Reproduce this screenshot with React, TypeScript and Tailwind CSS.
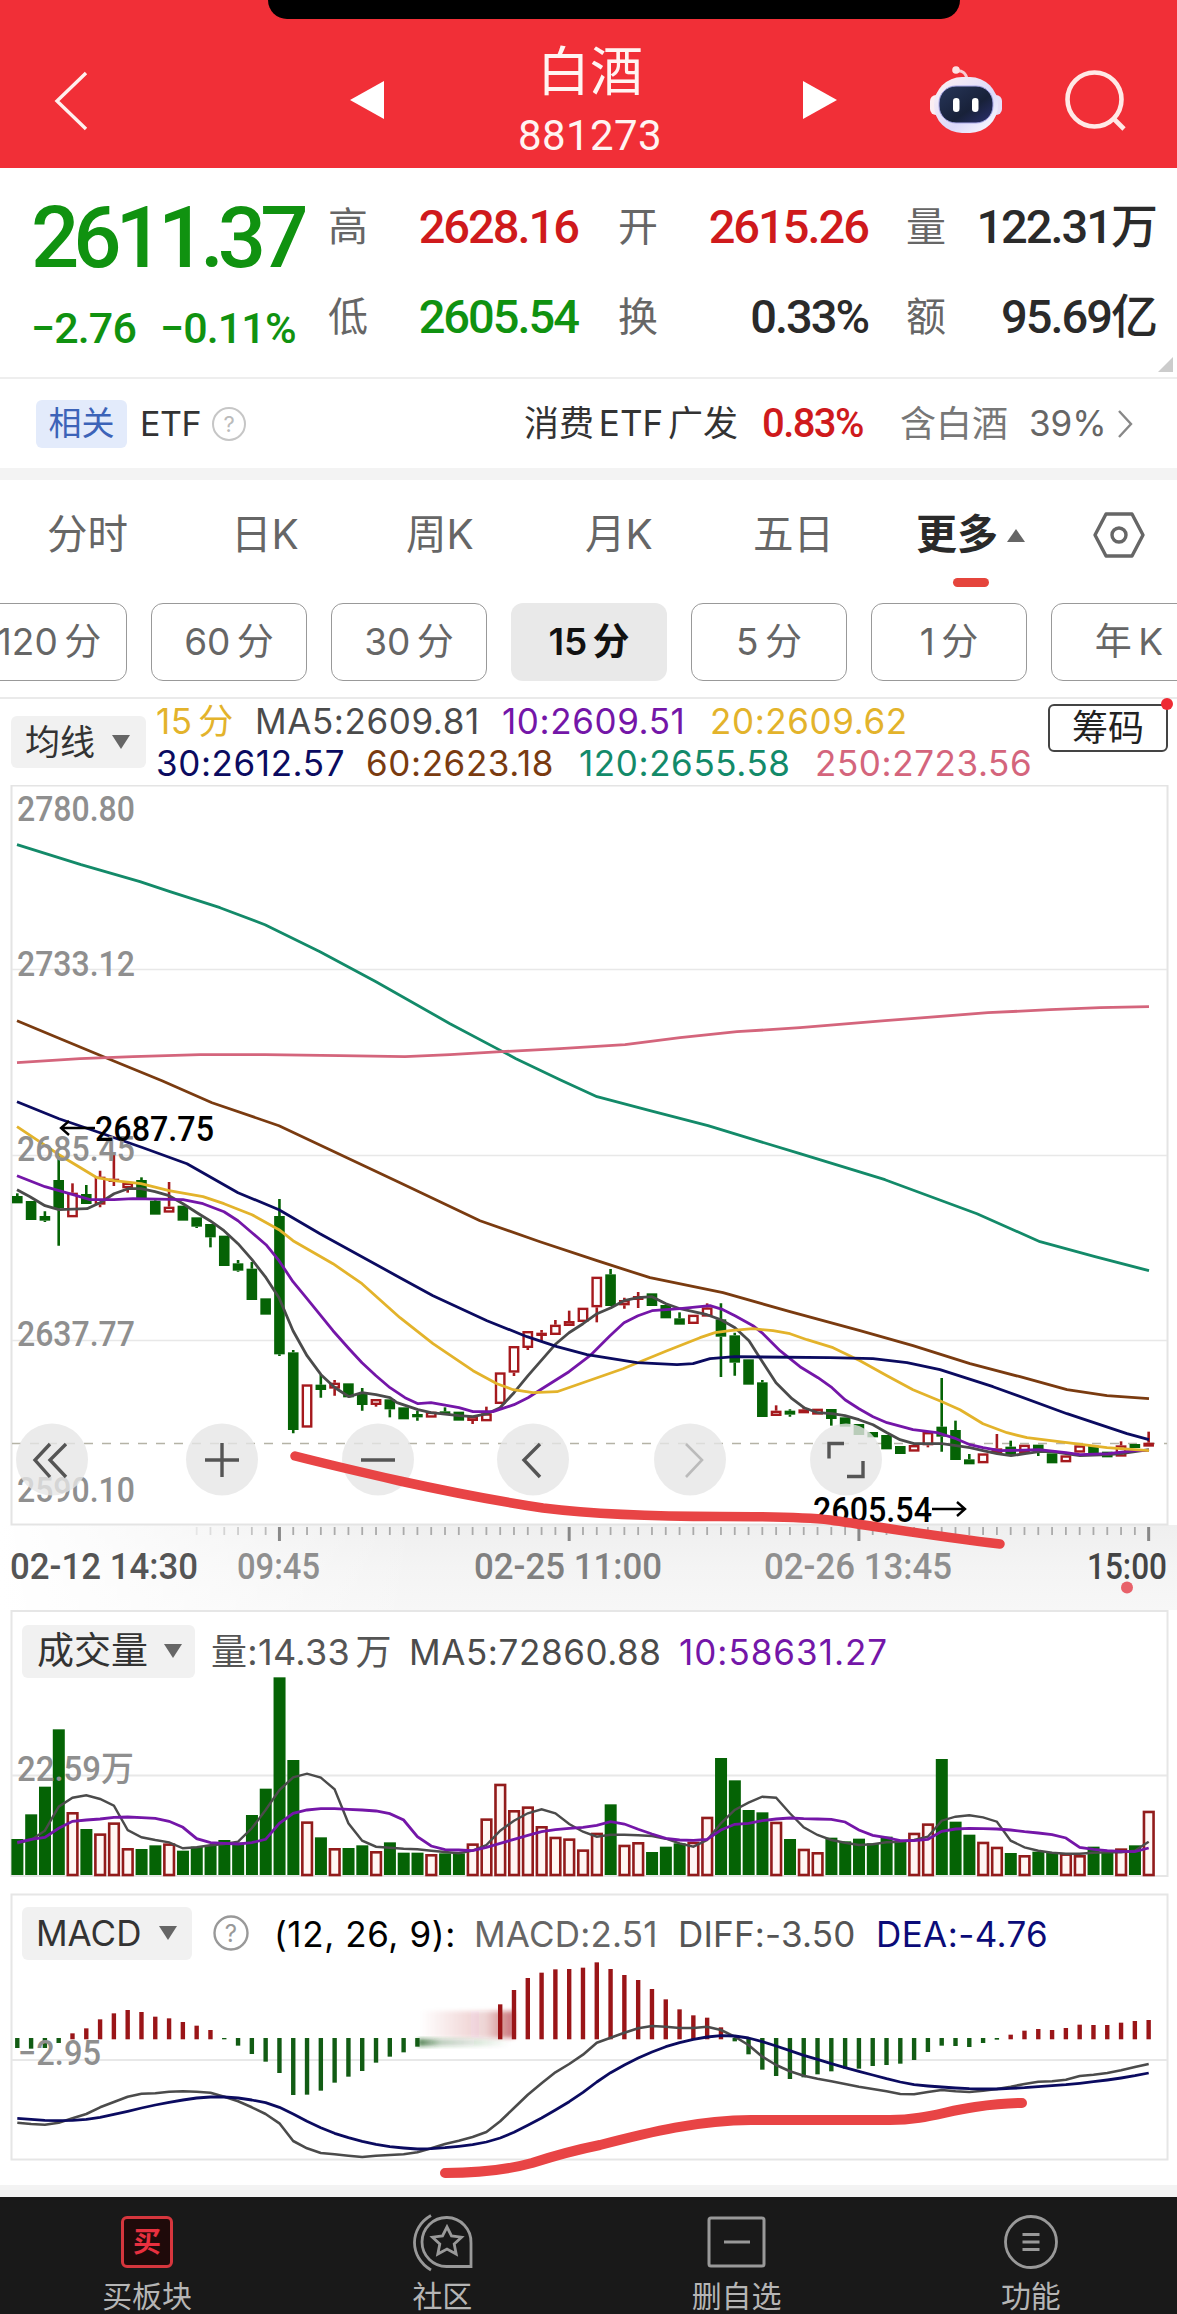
import React from 'react';

const GREEN = '#056305';
const RED = '#a5191d';
const STEP = 13.797;
const barX = (i: number) => 17.3 + i * STEP;

// [direction, body top, body bottom, high, low] in thirds of a pixel below y = 1080
type Candle = [string, number, number, number?, number?];

const candles: Candle[] = [
  ['g', 348, 370, 340], ['g', 363, 420], ['g', 408, 422, 394, 426], ['g', 300, 385, 225, 497],
  ['r', 338, 412, 310], ['g', 342, 372, 315], ['r', 290, 374, 272, 382], ['r', 296, 306, 225, 318],
  ['r', 308, 325, 308, 338], ['g', 300, 358, 292], ['g', 362, 404, 355], ['r', 380, 398, 306],
  ['g', 377, 422], ['g', 412, 440, 412, 444], ['g', 432, 472, 432, 502], ['g', 467, 558],
  ['g', 550, 572, 540, 575], ['g', 566, 660, 546], ['g', 655, 704], ['g', 408, 823, 357, 828],
  ['g', 817, 1050, 810, 1060], ['r', 913, 1043], ['g', 914, 930, 885, 953], ['r', 908, 926, 900, 947],
  ['g', 910, 952], ['g', 940, 975, 924, 992], ['r', 957, 975, 957, 980], ['g', 958, 988, 958, 1012],
  ['g', 982, 1018], ['g', 1002, 1012, 992, 1022], ['r', 995, 1013], ['g', 994, 1002, 982],
  ['g', 995, 1022], ['r', 1008, 1023, 1008, 1032], ['r', 1000, 1024, 980], ['r', 877, 972],
  ['r', 798, 878, 798, 888], ['r', 753, 804, 753, 810], ['r', 758, 768, 750, 784], ['r', 734, 765, 720],
  ['r', 723, 738, 692], ['r', 683, 726], ['r', 590, 682, 590, 727], ['g', 583, 678, 567],
  ['r', 660, 676, 653, 686], ['r', 648, 660, 636, 684], ['g', 640, 678], ['g', 675, 715],
  ['g', 715, 734, 697], ['r', 704, 732], ['r', 682, 710, 670], ['g', 718, 770, 670, 891],
  ['g', 766, 848, 758, 887], ['g', 838, 914], ['g', 907, 1011, 900], ['r', 992, 1008, 976],
  ['g', 992, 1004, 988, 1010], ['r', 988, 1000, 980], ['r', 986, 1004], ['g', 987, 1017, 987, 1037],
  ['g', 1012, 1040], ['g', 1032, 1065], ['g', 1056, 1072], ['g', 1065, 1108],
  ['g', 1098, 1122], ['r', 1095, 1115], ['r', 1056, 1096, 1056, 1102], ['g', 1040, 1070, 894, 1115],
  ['g', 1050, 1140, 1022], ['g', 1138, 1153, 1122], ['r', 1120, 1150], ['r', 1105, 1120, 1062],
  ['g', 1100, 1128, 1082], ['r', 1094, 1120], ['g', 1094, 1118, 1094, 1128], ['g', 1120, 1150],
  ['r', 1126, 1147], ['r', 1096, 1118], ['g', 1097, 1128], ['g', 1115, 1132],
  ['r', 1096, 1130, 1084], ['g', 1092, 1104], ['r', 1088, 1100, 1055],
];

const averages = [
  { color: '#4b4b4b', points: '17,1189 30,1196 45,1205 59,1209 87,1208 100,1202 114,1193 128,1188 141,1188 155,1191 169,1195 183,1203 197,1212 210,1220 224,1230 238,1243 252,1259 266,1277 279,1297 293,1330 307,1355 321,1374 335,1387 349,1396 362,1392 376,1394 390,1397 397,1402 418,1409 431,1412 459,1415 473,1416 487,1413 500,1407 514,1392 528,1375 542,1359 556,1343 569,1332 583,1323 597,1313 611,1307 624,1300 638,1297 652,1296 666,1303 680,1308 707,1314 721,1319 735,1327 749,1340 763,1362 776,1382 792,1398 804,1407 818,1412 832,1413 845,1415 859,1419 873,1424 887,1432 900,1439 914,1443 942,1443 956,1445 970,1447 983,1450 997,1453 1011,1455 1025,1453 1039,1451 1052,1451 1066,1453 1080,1455 1108,1454 1121,1453 1135,1451 1149,1449' },
  { color: '#7416a8', points: '17,1175 45,1186 73,1194 90,1199 114,1199 133,1198 183,1199 203,1203 224,1211 238,1220 252,1232 266,1244 279,1260 293,1281 307,1298 333,1330 349,1348 362,1362 376,1375 390,1387 405,1397 418,1403 431,1402 459,1407 473,1411 493,1411 514,1404 528,1397 542,1388 569,1371 590,1355 610,1335 624,1322 638,1315 652,1310 680,1308 710,1305 723,1309 735,1315 753,1325 763,1333 780,1350 800,1366 818,1377 832,1387 845,1399 859,1408 873,1416 887,1422 913,1429 937,1432 956,1438 970,1444 983,1447 1000,1450 1039,1449 1066,1452 1080,1454 1108,1453 1135,1450 1149,1450' },
  { color: '#e3b32b', points: '17,1126 59,1154 97,1177 114,1180 141,1183 169,1190 203,1196 224,1203 252,1214 279,1229 293,1240 333,1263 362,1283 400,1317 433,1343 473,1370 497,1383 513,1389 533,1392 557,1391 580,1383 623,1368 667,1350 700,1337 715,1332 730,1330 753,1328 773,1330 790,1333 807,1339 833,1347 860,1360 887,1375 913,1389 942,1401 960,1409 983,1423 1007,1432 1027,1437 1067,1442 1107,1447 1149,1450' },
  { color: '#0b0b60', points: '17,1101 59,1118 100,1132 143,1147 187,1163 238,1192 279,1209 320,1233 400,1277 433,1295 487,1320 527,1336 557,1346 587,1354 637,1362 677,1364 693,1363 710,1358 735,1356 830,1357 873,1358 907,1362 940,1369 993,1386 1067,1413 1127,1433 1149,1439' },
  { color: '#7a3b10', points: '17,1020 65,1040 118,1062 162,1080 212,1102 279,1125 400,1182 480,1220 540,1241 597,1260 650,1277 723,1292 790,1311 860,1330 913,1345 970,1363 1020,1376 1067,1389 1107,1395 1149,1398' },
  { color: '#138a69', points: '17,844 81,864 140,881 170,891 220,907 265,924 320,951 376,981 450,1023 516,1058 560,1079 597,1096 650,1110 708,1125 800,1153 885,1179 977,1213 1040,1241 1095,1256 1149,1270' },
  { color: '#d4657c', points: '17,1062 80,1058 133,1056 200,1054 265,1054 340,1055 405,1056 450,1054 501,1051 560,1048 625,1044 680,1037 737,1031 800,1027 885,1020 988,1012 1050,1009 1100,1007 1149,1006' },
];

// Bar tops in thirds of a pixel below y = 1610, the base line is at 795
const volumeTops = [
  687, 613, 530, 358, 606, 657, 670, 637, 714, 717, 706, 700, 722, 710, 705, 690, 698, 615, 536, 202, 450,
  634, 682, 714, 714, 706, 723, 697, 728, 728, 732, 730, 730, 700, 625, 521, 600, 589, 648, 680, 685, 718,
  668, 583, 704, 696, 726, 710, 700, 695, 620, 444, 511, 600, 607, 635, 687, 716, 726, 683, 694, 686, 700,
  680, 694, 668, 640, 447, 635, 674, 695, 710, 729, 735, 725, 728, 730, 735, 710, 725, 715, 706, 602,
];
const volumeRed = new Set([4, 6, 7, 8, 11, 21, 23, 26, 30, 33, 34, 35, 36, 37, 38, 39, 40, 41, 42, 44, 45, 49, 50, 55, 57, 58, 65, 66, 70, 71, 73, 76, 77, 80, 82]);
const volumeMa5 = [
  700, 690, 662, 590, 563, 556, 567, 587, 660, 682, 690, 697, 715, 712, 706, 702, 695, 655, 600, 540, 502,
  491, 503, 538, 640, 692, 710, 713, 716, 718, 722, 726, 730, 722, 705, 662, 632, 610, 598, 610, 642, 665,
  680, 674, 674, 676, 678, 686, 700, 710, 690, 640, 600, 578, 560, 563, 610, 652, 675, 690, 698, 705, 703,
  697, 695, 690, 680, 632, 620, 616, 622, 635, 692, 712, 722, 728, 731, 731, 728, 727, 727, 722, 695,
];
const volumeMa10 = [
  697, 688, 682, 655, 634, 630, 627, 622, 621, 623, 625, 634, 652, 686, 698, 700, 702, 698, 688, 640, 610,
  600, 596, 596, 598, 600, 603, 611, 630, 680, 708, 719, 720, 722, 712, 700, 688, 676, 665, 659, 655, 652,
  646, 635, 642, 658, 672, 685, 690, 691, 688, 660, 643, 640, 632, 627, 624, 626, 627, 628, 636, 660, 676,
  683, 692, 692, 688, 664, 657, 655, 656, 657, 660, 665, 669, 674, 684, 712, 718, 722, 724, 725, 714,
];

// MACD values in thirds of a pixel below y = 1890, zero line at 446; null bars are drawn as a fade
const macdBars: (number | null)[] = [
  474, 476, 474, 459, 430, 415, 388, 370, 360, 366, 380, 385, 396, 407, 420, 448, 467, 492, 515, 549, 615,
  614, 602, 578, 560, 543, 518, 500, 487, 470, null, null, null, null, null, 343, 300, 264, 248, 238, 237,
  233, 217, 237, 255, 270, 297, 328, 358, 376, 383, 412, 454, 493, 539, 558, 567, 562, 553, 544, 536, 536,
  528, 525, 521, 510, 486, 467, 468, 471, 459, 449, 434, 422, 417, 420, 414, 404, 405, 405, 398, 393, 390,
];
const diff = [
  698, 702, 704, 698, 685, 672, 652, 636, 620, 611, 610, 605, 604, 605, 608, 620, 634, 652, 672, 700, 753,
  775, 789, 793, 797, 801, 797, 795, 793, 787, 775, 762, 752, 741, 726, 694, 654, 614, 580, 547, 522, 494,
  458, 443, 428, 415, 408, 410, 414, 414, 410, 420, 440, 465, 500, 525, 544, 557, 566, 574, 582, 590, 597,
  604, 612, 613, 606, 600, 604, 606, 602, 597, 590, 582, 575, 574, 569, 558, 554, 549, 541, 531, 522,
];
const dea = [
  685, 688, 691, 692, 691, 688, 682, 673, 664, 654, 645, 637, 630, 624, 621, 621, 624, 630, 638, 652, 672,
  694, 713, 730, 743, 754, 763, 770, 774, 777, 776, 773, 769, 764, 756, 744, 727, 706, 684, 660, 635, 607,
  576, 548, 525, 504, 486, 470, 458, 448, 441, 437, 438, 444, 455, 468, 482, 496, 508, 521, 533, 544, 555,
  566, 576, 584, 588, 591, 594, 596, 597, 597, 595, 593, 590, 587, 584, 580, 575, 570, 564, 557, 549,
];

const toPoints = (values: number[], top: number) =>
  values.map((v, i) => `${barX(i).toFixed(1)},${(top + v / 3).toFixed(1)}`).join(' ');

const latin = "font-['Inter','Noto_Sans_CJK_SC',sans-serif]";
const din = "font-['Roboto','Noto_Sans_CJK_SC',sans-serif]";

const Header = () => (
  <header className="relative flex h-[168px] items-center bg-[#f12f37] text-[#fff4f2]">
    <div className="absolute left-[268px] top-0 h-[19px] w-[692px] rounded-b-[40px] bg-black" />
    <svg className="mt-[34px] ml-[52px] h-[64px] w-[38px]" viewBox="0 0 38 64" fill="none" stroke="#fff0ee" strokeWidth="3.4">
      <path d="M34 4 5 32l29 28" />
    </svg>
    <svg className="mt-[32px] ml-[260px] h-[38px] w-[34px]" viewBox="0 0 34 38" fill="#fff">
      <path d="M34 0v38L0 19z" />
    </svg>
    <div className="ml-[105px] w-[202px] pt-7 text-center">
      <h1 className="h-[74px] text-[53px] leading-[78px]">白酒</h1>
      <p className={`${din} h-[56px] text-[42px] leading-[58px] tracking-[0.4px]`}>881273</p>
    </div>
    <svg className="mt-[32px] ml-[112px] h-[38px] w-[34px]" viewBox="0 0 34 38" fill="#fff">
      <path d="M0 0v38l34-19z" />
    </svg>
    <svg className="mt-[30px] ml-[90px] h-[74px] w-[78px]" viewBox="927 61 78 74">
      <defs>
        <linearGradient id="head" x1="0" y1="0" x2="1" y2="1">
          <stop offset="0" stopColor="#fff3f3" />
          <stop offset=".6" stopColor="#dcd9fa" />
          <stop offset="1" stopColor="#fff" />
        </linearGradient>
        <linearGradient id="face" x1="0" y1="0" x2="1" y2="1">
          <stop offset="0" stopColor="#27365a" />
          <stop offset=".6" stopColor="#182139" />
          <stop offset="1" stopColor="#2b3070" />
        </linearGradient>
      </defs>
      <path d="M956 70c6-1 10 2 11 8" fill="none" stroke="#f8ccd3" strokeWidth="3" />
      <circle cx="956" cy="69" r="3.8" fill="#fde3e5" />
      <rect x="930" y="94" width="12" height="20" rx="6" fill="#fbeef2" />
      <rect x="990" y="94" width="12" height="20" rx="6" fill="#e6dff8" />
      <rect x="934" y="76" width="64" height="56" rx="28" fill="url(#head)" />
      <rect x="939" y="85" width="54" height="37" rx="17" fill="url(#face)" stroke="#a9a8e8" strokeWidth="1" />
      <rect x="953" y="97" width="6.5" height="14" rx="3.2" fill="#fff" />
      <rect x="972" y="97" width="6.5" height="14" rx="3.2" fill="#fff" />
    </svg>
    <svg className="mt-[34px] ml-[57px] h-[70px] w-[70px]" viewBox="1061 66 70 70" fill="none" stroke="#ffe9e6" strokeWidth="4.6">
      <circle cx="1093.5" cy="99.5" r="27" />
      <path d="m1112 118 11 11" />
    </svg>
  </header>
);

const Stat = ({ label, value, color }: { label: string; value: string; color: string }) => (
  <div className="flex h-[90px] w-[250px] items-center justify-between">
    <span className="text-[40px] text-[#666]">{label}</span>
    <span className={`${din} text-[47px] font-medium tracking-[-2px] ${color}`}>{value}</span>
  </div>
);

const Quote = () => (
  <section className="relative flex h-[211px] border-b-2 border-[#eee] bg-white text-[#2a2a2a]">
    <div className={`${din} w-[328px] pl-[31px] pt-[20px] text-[#109210]`}>
      <div className="h-[102px] text-[85px] leading-[100px] font-medium tracking-[-6px]">2611.37</div>
      <div className="flex h-[76px] items-center gap-[24px] text-[43px] leading-[76px] font-medium tracking-[-0.9px]">
        <span>−2.76</span>
        <span>−0.11%</span>
      </div>
    </div>
    <div className="grid flex-1 content-start grid-cols-[290px_288px_250px] pt-[14px]">
      <Stat label="高" value="2628.16" color="text-[#cf1a1c]" />
      <Stat label="开" value="2615.26" color="text-[#cf1a1c]" />
      <Stat label="量" value="122.31万" color="text-[#2a2a2a]" />
      <Stat label="低" value="2605.54" color="text-[#109210]" />
      <Stat label="换" value="0.33%" color="text-[#2a2a2a]" />
      <Stat label="额" value="95.69亿" color="text-[#2a2a2a]" />
    </div>
    <svg className="absolute right-1 bottom-[5px] h-[15px] w-[15px]" viewBox="0 0 15 15" fill="#ccc">
      <path d="M15 0v15H0z" />
    </svg>
  </section>
);

const RelatedEtf = () => (
  <section className="flex h-[89px] items-center bg-white text-[33px]">
    <span className="ml-9 flex h-[48px] w-[91px] items-center justify-center rounded-md bg-[#e3ebfb] text-[#3c63b8]">相关</span>
    <span className="ml-[13px] w-[65px] text-[34px] tracking-[-0.5px] text-[#333]">ETF</span>
    <svg className="ml-[6px] h-[36px] w-[36px]" viewBox="0 0 36 36" fill="none" stroke="#c6c6c6" strokeWidth="2">
      <circle cx="18" cy="18" r="16" />
      <text x="18" y="26" textAnchor="middle" fontSize="22" fill="#bbb" stroke="none">?</text>
    </svg>
    <span className="ml-auto w-[238px] text-[35px] [word-spacing:-5px] text-[#333]">消费 ETF 广发</span>
    <span className={`${din} w-[138px] text-[40px] font-medium tracking-[-1.6px] text-[#cf1a1c]`}>0.83%</span>
    <span className="w-[129px] text-[36px] text-[#777]">含白酒</span>
    <span className="w-[88px] text-[35px] text-[#666]">39%</span>
    <svg className="mr-[44px] h-[30px] w-[16px]" viewBox="0 0 16 30" fill="none" stroke="#888" strokeWidth="2.4">
      <path d="m2 2 12 13L2 28" />
    </svg>
  </section>
);

const Tabs = () => (
  <nav className="flex h-[123px] bg-white text-[40.5px] text-[#666]">
    <div className="flex h-[110px] flex-1 items-center">
      <span className="ml-[47px] w-[184px]">分时</span>
      <span className="w-[175px]">日K</span>
      <span className="w-[179px]">周K</span>
      <span className="w-[168px]">月K</span>
      <span className="w-[163px]">五日</span>
      <span className="relative w-[91px] text-[41px] font-bold text-[#2a2a2a]">
        更多
        <i className="absolute left-[37px] top-[74px] h-[9px] w-[36px] rounded-full bg-[#e5453c]" />
      </span>
      <svg className="h-[13px] w-[18px]" viewBox="0 0 18 13" fill="#666">
        <path d="M9 0 18 13H0z" />
      </svg>
      <svg className="ml-[67px] h-[50px] w-[54px]" viewBox="0 0 54 50" fill="none" stroke="#666" strokeWidth="3.4">
        <path d="M14 4h26l11 21-11 21H14L3 25z" strokeLinejoin="round" />
        <circle cx="27" cy="25" r="7" />
      </svg>
    </div>
  </nav>
);

const periods = ['120 分', '60 分', '30 分', '15 分', '5 分', '1 分', '年 K'];

const Periods = () => (
  <div className="flex h-[94px] gap-[24px] overflow-hidden bg-white">
    {periods.map((p, i) => (
      <button
        key={p}
        className={`h-[78px] w-[156px] shrink-0 rounded-xl text-[37px] [word-spacing:-4px] ${i === 0 ? '-ml-[29px]' : ''} ${
          p === '15 分' ? 'bg-[#e9e9e9] font-semibold text-[#111]' : 'border-[1.5px] border-[#999] text-[#666]'
        }`}
      >
        {p}
      </button>
    ))}
  </div>
);

const Dropdown = ({ label, className }: { label: string; className: string }) => (
  <button className={`flex shrink-0 items-center justify-between rounded-md bg-[#f1f1f1] text-[#333] ${className}`}>
    {label}
    <svg className="h-[14px] w-[20px]" viewBox="0 0 20 14" fill="#666">
      <path d="M1 0h18L10 14z" />
    </svg>
  </button>
);

const Legend = () => (
  <div className="flex h-[88px] border-t-2 border-[#eaeaea] bg-white">
    <Dropdown label="均线" className="ml-[11px] mt-[17px] h-[52px] w-[135px] pr-[15px] pl-[14px] text-[35px]" />
    <div className="ml-[10px] w-[892px] pt-px text-[35px] tracking-[0.6px] whitespace-nowrap">
      <div className="flex h-[42px] items-center">
        <span className="w-[99px] [word-spacing:-5px] text-[#e3b32b]">15 分</span>
        <span className="w-[247px] text-[#4b4b4b]">MA5:2609.81</span>
        <span className="w-[208px] text-[#7416a8]">10:2609.51</span>
        <span className="text-[#e3b32b]">20:2609.62</span>
      </div>
      <div className="flex h-[42px] items-center">
        <span className="w-[210px] text-[#0b0b60]">30:2612.57</span>
        <span className="w-[213px] text-[#7a3b10]">60:2623.18</span>
        <span className="w-[236px] text-[#138a69]">120:2655.58</span>
        <span className="text-[#d4657c]">250:2723.56</span>
      </div>
    </div>
    <div className="relative mt-[5px] h-[48px] w-[120px] rounded-md border-2 border-[#444] text-center text-[36px] leading-[44px] text-[#222]">
      筹码
      <i className="absolute -top-[8px] -right-[7px] h-[12px] w-[12px] rounded-full bg-[#ee2a33]" />
    </div>
  </div>
);

const AxisText = ({ x, y, w, fill = '#8f8f8f', size = 35, children }: { x: number; y: number; w: number; fill?: string; size?: number; children: string }) => (
  <text x={x} y={y} textLength={w} lengthAdjust="spacingAndGlyphs" fontSize={size} fill={fill} fontWeight={480} className={din}>
    {children}
  </text>
);

const controls = [52, 222, 378, 533, 690, 846];

const PriceChart = () => (
  <svg className="block h-[825px] w-[1177px]" viewBox="0 785 1177 825" fill="none">
    <defs>
      <linearGradient id="axis" x1="0" y1="0" x2="0" y2="1">
        <stop offset="0" stopColor="#efefef" />
        <stop offset=".5" stopColor="#f4f4f4" />
        <stop offset="1" stopColor="#f7f7f7" />
      </linearGradient>
      <linearGradient id="axisFade" x1="0" y1="0" x2="1" y2="0">
        <stop offset="0" stopColor="#fff" />
        <stop offset="1" stopColor="#fff" stopOpacity="0" />
      </linearGradient>
    </defs>
    <rect x="0" y="785" width="1177" height="825" fill="#fff" />
    <rect x="0" y="1525" width="1177" height="85" fill="url(#axis)" />
    <rect x="0" y="1525" width="420" height="85" fill="url(#axisFade)" />
    <rect x="11.5" y="785.5" width="1156" height="739" stroke="#e4e4e4" strokeWidth="2" />
    <path d="M12 969.5H1167M12 1155.5H1167M12 1340.5H1167" stroke="#e8e8e8" strokeWidth="1.5" />
    <path d="M12 1443.5H1167" stroke="#b5b3a6" strokeWidth="1.5" strokeDasharray="9 9" />
    {candles.map(([dir, top, bottom, high = top, low = bottom], i) => {
      const x = barX(i);
      const y = 1080 + top / 3;
      const h = (bottom - top) / 3;
      const color = dir === 'g' ? GREEN : RED;
      return (
        <g key={i} stroke={color} strokeWidth="2.6">
          <path d={`M${x} ${1080 + high / 3}V${y}M${x} ${y + h}V${1080 + low / 3}`} />
          {dir === 'g' || h < 4.5 ? (
            <rect x={x - 5.3} y={y} width="10.6" height={h} fill={color} stroke="none" />
          ) : (
            <rect x={x - 4.2} y={y + 1.2} width="8.4" height={h - 2.4} fill="#fff" strokeWidth="2.4" />
          )}
        </g>
      );
    })}
    <g transform="translate(0 .7)">
      {averages.map((m) => (
        <polyline key={m.color} points={m.points} stroke={m.color} strokeWidth="2.8" strokeLinejoin="round" />
      ))}
    </g>
    <AxisText x={17} y={821} w={118}>2780.80</AxisText>
    <AxisText x={17} y={976} w={118}>2733.12</AxisText>
    <AxisText x={17} y={1161} w={118}>2685.45</AxisText>
    <AxisText x={17} y={1346} w={118}>2637.77</AxisText>
    <AxisText x={17} y={1502} w={118}>2590.10</AxisText>
    <path d="M95 1128H61m8-7-8 7 8 7" stroke="#000" strokeWidth="2.4" />
    <AxisText x={95} y={1141} w={119} fill="#000">2687.75</AxisText>
    {controls.map((x) => (
      <circle key={x} cx={x} cy="1459.5" r="36" fill="#e6e6e6" fillOpacity=".8" />
    ))}
    <g stroke="#555" strokeWidth="3.4">
      <path d="m50 1444-15 16 15 17M66 1444l-16 16 16 17" />
      <path d="M205 1460h34M222 1443v34" />
      <path d="M361 1460h34" />
      <path d="m540 1444-16 16 16 17" />
      <path d="M844 1443.5h-15v15M863 1461v15.5h-16" />
      <path d="m686 1444 16 16-16 17" stroke="#bbb" strokeWidth="2.6" />
    </g>
    <AxisText x={813} y={1522} w={119} fill="#000">2605.54</AxisText>
    <path d="M932 1509h33m-8-7 8 7-8 7" stroke="#000" strokeWidth="2.4" />
    {candles.map((_, i) => {
      const major = i === 19 || i === 40 || i === 61 || i === 82;
      if (i < 13) return null;
      return (
        <path
          key={i}
          d={`M${barX(i)} 1527V${major ? 1541 : 1535}`}
          stroke={major ? '#888' : '#aaa'}
          strokeWidth={major ? 3 : 1.8}
          strokeOpacity={i < 19 ? (i - 11) / 9 : 1}
        />
      );
    })}
    <AxisText x={10} y={1579} w={188} size={36} fill="#555">02-12 14:30</AxisText>
    <AxisText x={237} y={1579} w={83} size={36}>09:45</AxisText>
    <AxisText x={474} y={1579} w={188} size={36} fill="#808080">02-25 11:00</AxisText>
    <AxisText x={764} y={1579} w={188} size={36}>02-26 13:45</AxisText>
    <AxisText x={1087} y={1579} w={80} size={36} fill="#444">15:00</AxisText>
    <circle cx="1127" cy="1587.500" r="6" fill="#e8616a" />
    <path
      d="M295 1456C330 1465 365 1473 400 1481C450 1492 490 1500 543 1508C600 1515 660 1516.500 720 1516.500C760 1516.500 800 1516.500 830 1520C880 1527 940 1537 1000 1544"
      stroke="#e84445"
      strokeWidth="9.5"
      strokeLinecap="round"
    />
  </svg>
);

const VolumeChart = () => (
  <section className="relative h-[280px] bg-white">
    <svg className="absolute inset-0 h-[280px] w-[1177px]" viewBox="0 1610 1177 280" fill="none">
      <rect x="11.5" y="1611" width="1156" height="265" stroke="#e6e6e6" strokeWidth="2" />
      <path d="M12 1775.5H1167" stroke="#e8e8e8" strokeWidth="2" />
      {volumeTops.map((v, i) => {
        const y = 1610 + v / 3;
        return volumeRed.has(i) ? (
          <rect key={i} x={barX(i) - 4.7} y={y + 1.3} width="9.6" height={1873.7 - y} fill="#fff6f4" stroke="#921b1b" strokeWidth="2.6" />
        ) : (
          <rect key={i} x={barX(i) - 5.9} y={y} width="12" height={1875 - y} fill={GREEN} />
        );
      })}
      <polyline points={toPoints(volumeMa5, 1610)} stroke="#4b4b4b" strokeWidth="2.4" />
      <polyline points={toPoints(volumeMa10, 1610)} stroke="#7416a8" strokeWidth="2.8" />
      <AxisText x={17} y={1781} w={117}>22.59万</AxisText>
    </svg>
    <div className="relative flex items-center pt-[13px] text-[35px] tracking-[0.3px] whitespace-nowrap">
      <Dropdown label="成交量" className="ml-[22px] h-[53px] w-[173px] pr-[12px] pl-[15px] text-[37px] tracking-normal" />
      <span className="ml-[16px] w-[198px] pt-0.5 text-[36px] [word-spacing:-5px] text-[#555]">量:14.33 万</span>
      <span className="w-[270px] pt-0.5 tracking-[0.6px] text-[#4b4b4b]">MA5:72860.88</span>
      <span className="pt-0.5 tracking-[1px] text-[#7416a8]">10:58631.27</span>
    </div>
  </section>
);

const MacdChart = () => (
  <section className="relative h-[295px] bg-white">
    <svg className="absolute inset-0 h-[295px] w-[1177px]" viewBox="0 1890 1177 295" fill="none">
      <defs>
        <linearGradient id="fadeRed" x1="0" y1="0" x2="1" y2="0">
          <stop offset="0" stopColor="#a5191d" stopOpacity="0" />
          <stop offset=".7" stopColor="#a5191d" stopOpacity=".2" />
          <stop offset="1" stopColor="#a5191d" stopOpacity=".6" />
        </linearGradient>
        <linearGradient id="fadeGreen" x1="0" y1="0" x2="1" y2="0">
          <stop offset="0" stopColor="#1d5a1d" stopOpacity=".8" />
          <stop offset=".25" stopColor="#1d5a1d" stopOpacity=".3" />
          <stop offset="1" stopColor="#1d5a1d" stopOpacity="0" />
        </linearGradient>
        <filter id="soft" x="-10%" y="-30%" width="120%" height="160%">
          <feGaussianBlur stdDeviation="2" />
        </filter>
      </defs>
      <rect x="11.5" y="1894.5" width="1156" height="265" stroke="#e6e6e6" strokeWidth="2" />
      <path d="M12 2060H1167" stroke="#e8e8e8" strokeWidth="2" />
      <rect x="420" y="2011" width="94" height="27" fill="url(#fadeRed)" filter="url(#soft)" />
      <rect x="418" y="2039" width="92" height="7" fill="url(#fadeGreen)" filter="url(#soft)" />
      {macdBars.map((v, i) => {
        if (v === null) return null;
        const up = v < 446;
        return (
          <path
            key={i}
            d={`M${barX(i)} ${up ? 2039.3 : 2038}V${1890 + v / 3}`}
            stroke={up ? '#9a1518' : '#125c14'}
            strokeWidth="4.4"
          />
        );
      })}
      <polyline points={toPoints(diff, 1890)} stroke="#4b4b4b" strokeWidth="2.6" strokeLinejoin="round" />
      <polyline points={toPoints(dea, 1890)} stroke="#0b0b60" strokeWidth="2.8" strokeLinejoin="round" />
      <AxisText x={18} y={2065} w={83}>−2.95</AxisText>
      <path
        d="M445 2173C475 2173 503 2171 532 2163C560 2154 580 2149 600 2145C650 2132 700 2120 751 2120H890C925 2120 945 2111 975 2107C995 2104 1010 2103 1022 2103"
        stroke="#e84445"
        strokeWidth="10"
        strokeLinecap="round"
      />
    </svg>
    <div className="relative flex items-center pt-[16px] text-[35px] whitespace-nowrap">
      <Dropdown label="MACD" className="ml-[22px] h-[53px] w-[170px] pr-[14px] pl-[14px] text-[35px]" />
      <svg className="ml-[20px] h-[38px] w-[38px]" viewBox="0 0 38 38" fill="none" stroke="#999" strokeWidth="2.4">
        <circle cx="19" cy="19" r="16.5" />
        <text x="19" y="27.5" textAnchor="middle" fontSize="24" fill="#999" stroke="none">?</text>
      </svg>
      <span className="ml-[24px] w-[200px] pt-0.5 tracking-[0.6px] text-black">(12, 26, 9):</span>
      <span className="w-[204px] pt-0.5 tracking-[0.2px] text-[#666]">MACD:2.51</span>
      <span className="w-[198px] pt-0.5 tracking-[0.2px] text-[#555]">DIFF:-3.50</span>
      <span className="pt-0.5 tracking-[0.4px] text-[#0b0b78]">DEA:-4.76</span>
    </div>
  </section>
);

const BottomNav = () => (
  <footer className="grid h-[117px] grid-cols-4 bg-[#191919] text-[30px] leading-[36px] text-[#b5b5b5]">
    <div className="flex flex-col items-center pt-[17px]">
      <div className="flex h-[56px] w-[56px] items-center justify-center">
        <span className="flex h-[52px] w-[52px] items-center justify-center rounded-md border-[3px] border-[#d6363d] bg-[#1f0a0a] text-[28px] font-bold text-[#e8303f]">
          买
        </span>
      </div>
      <span className="mt-[8px]">买板块</span>
    </div>
    <div className="flex flex-col items-center pt-[17px] pl-[2px]">
      <svg className="h-[60px] w-[62px]" viewBox="0 0 62 60" fill="none" stroke="#999" strokeWidth="2.8">
        <path d="M60 52.5V29A24.5 24.5 0 1 0 36 52.5z" />
        <path d="M20 1.5C-2 14-2 43 20 56" />
        <path d="m36 13 4.5 9 10 1.200-7.300 6.800 2 10-9.200-5-9.200 5 2-10-7.300-6.800 10-1.200z" />
      </svg>
      <span className="mt-[4px]">社区</span>
    </div>
    <div className="flex flex-col items-center pt-[17px] pl-[2px]">
      <svg className="h-[60px] w-[62px]" viewBox="0 0 62 60" fill="none" stroke="#999" strokeWidth="3">
        <rect x="3" y="4" width="55" height="48" rx="2" />
        <path d="M18 28h26" />
      </svg>
      <span className="mt-[4px]">删自选</span>
    </div>
    <div className="flex flex-col items-center pt-[17px] pl-[2px]">
      <svg className="h-[60px] w-[62px]" viewBox="0 0 62 60" fill="none" stroke="#999" strokeWidth="2.8">
        <circle cx="31" cy="28" r="25.5" />
        <path d="M22.5 20.5h17M22.5 28h17M22.5 35.5h17" />
      </svg>
      <span className="mt-[4px]">功能</span>
    </div>
  </footer>
);

export default function App() {
  return (
    <main className={`${latin} h-[2314px] w-[1177px] overflow-hidden bg-white`}>
      <Header />
      <Quote />
      <RelatedEtf />
      <div className="h-3 bg-[#f3f3f3]" />
      <Tabs />
      <Periods />
      <Legend />
      <PriceChart />
      <VolumeChart />
      <MacdChart />
      <div className="h-3 bg-[#f3f3f3]" />
      <BottomNav />
    </main>
  );
}
